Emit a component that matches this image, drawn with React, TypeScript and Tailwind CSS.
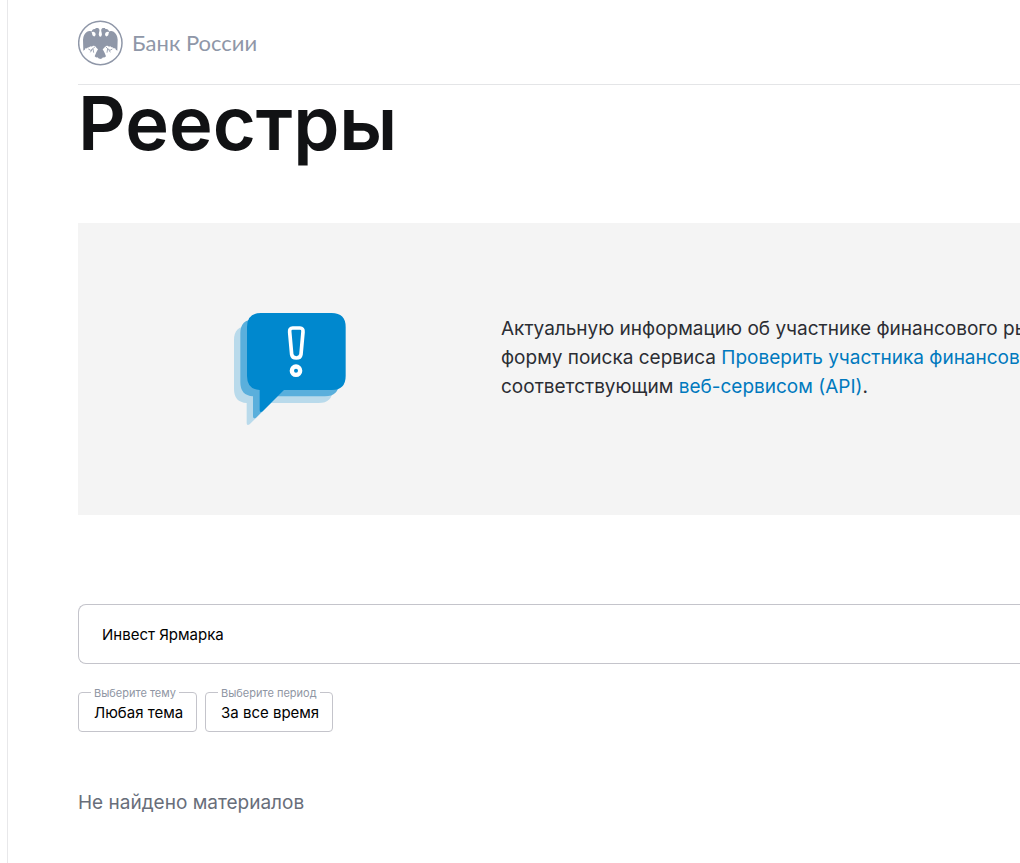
import { useState } from "react";

const TEMAS = ["Любая тема"];
const PERIODOS = ["За все время"];

function Logo() {
  return (
    <a href="#" className="flex items-center gap-2 text-[#8f97a8]">
      <svg viewBox="52 31 138 138" className="size-[46px] shrink-0" fill="currentColor" aria-hidden="true">
        <circle cx="119" cy="100" r="65" fill="none" stroke="currentColor" strokeWidth="4.5" />
        <EagleHalf />
        <g transform="translate(238 0) scale(-1 1)">
          <EagleHalf />
        </g>
      </svg>
      <span className="font-['Lato',sans-serif] text-[22px] leading-7">Банк России</span>
    </a>
  );
}

function EagleHalf() {
  return (
    <>
      <path d="M120 82 L116 80 Q113 74 115 69 Q119 59 112 55 L105 55 L104 58 Q98 57 95 61 L92 67 L99 66 Q105 68 105 74 Q104 82 99 80 Q94 78 94 71 L92 65 Q86 62 79 66 Q68 73 67 90 L68 123 Q73 121 75 115 Q79 118 82 113 Q86 114 89 110 Q93 112 97 108 L104 109 Q106 115 112 119 L107 128 L102 140 Q107 145 111 143 Q115 149 120 147 Z" />
      <path
        d="M104 110 L97 117 L99 129 M97 117 L90 122 L83 118 M94 120 L89 128"
        fill="none"
        stroke="currentColor"
        strokeWidth="2.5"
      />
    </>
  );
}

function NoticeIcon() {
  const bubble =
    "M123 39 H335 Q377 39 377 81 V228 Q377 270 335 270 H192 L128 334 Q119 339 119 330 V270 Q81 268 81 228 V81 Q81 39 123 39 Z";
  return (
    <svg viewBox="42 39 336 336" className="size-28 shrink-0" aria-hidden="true">
      <path d={bubble} fill="#b9daeb" transform="translate(-39 39)" />
      <path d={bubble} fill="#5aafdc" transform="translate(-20 19)" />
      <path d={bubble} fill="#0088ce" />
      <path
        d="M218 84 H240 Q250 84 249 96 L243 163 Q241 174 229 174 Q217 174 215 163 L209 96 Q208 84 218 84 Z"
        fill="none"
        stroke="#fff"
        strokeWidth="11"
      />
      <circle cx="228" cy="212" r="12.5" fill="none" stroke="#fff" strokeWidth="13" />
    </svg>
  );
}

interface FilterProps {
  id: string;
  label: string;
  options: string[];
  className: string;
}

function Filter({ id, label, options, className }: FilterProps) {
  return (
    <fieldset className={`h-12 rounded border border-[#c4c4cb] ${className}`}>
      <legend className="ml-3 h-4 px-[3px] text-[11px] leading-[18px] whitespace-nowrap text-[#8f96a3]">
        <label htmlFor={id}>{label}</label>
      </legend>
      <select id={id} className="block h-[26px] w-full appearance-none bg-transparent pl-[15px] text-[15px] leading-[26px] outline-none">
        {options.map((o) => (
          <option key={o}>{o}</option>
        ))}
      </select>
    </fieldset>
  );
}

export default function App() {
  const [query, setQuery] = useState("Инвест Ярмарка");

  return (
    <div className="ml-[7px] min-h-screen overflow-hidden border-l border-[#e8e8ea] bg-white pl-[70px] font-['Inter',sans-serif] text-black">
      <header className="flex h-[85px] items-center border-b border-[#e4e5e7] pt-[2px]">
        <Logo />
      </header>

      <main>
        <h1 className="h-[138px] text-[74px] leading-[76px] font-semibold text-[#111214]">Реестры</h1>

        <section className="flex h-[292px] items-center bg-[#f4f4f4] pl-[156px]">
          <NoticeIcon />
          <p className="mb-6 ml-[155px] text-[19px] leading-[29px] whitespace-nowrap text-[#2b2d33]">
            Актуальную информацию об участнике финансового рынка
            <br />
            форму поиска сервиса{" "}
            <a href="#" className="text-[#0079be]">
              Проверить участника финансового рынка
            </a>
            <br />
            соответствующим{" "}
            <a href="#" className="text-[#0079be]">
              веб-сервисом (API)
            </a>
            .
          </p>
        </section>

        <form className="pt-[89px]" onSubmit={(e) => e.preventDefault()}>
          <input
            type="text"
            aria-label="Поиск"
            value={query}
            onChange={(e) => setQuery(e.target.value)}
            className="block h-[60px] w-full rounded-l-lg border border-r-0 border-[#c4c4cb] px-[23px] text-[15px] outline-none"
          />
          <div className="mt-5 flex gap-2">
            <Filter id="tema" label="Выберите тему" options={TEMAS} className="w-[119px]" />
            <Filter id="period" label="Выберите период" options={PERIODOS} className="w-32" />
          </div>
        </form>

        <p className="mt-14 py-px text-[19px] leading-7 text-[#686e7a]">Не найдено материалов</p>
      </main>
    </div>
  );
}
